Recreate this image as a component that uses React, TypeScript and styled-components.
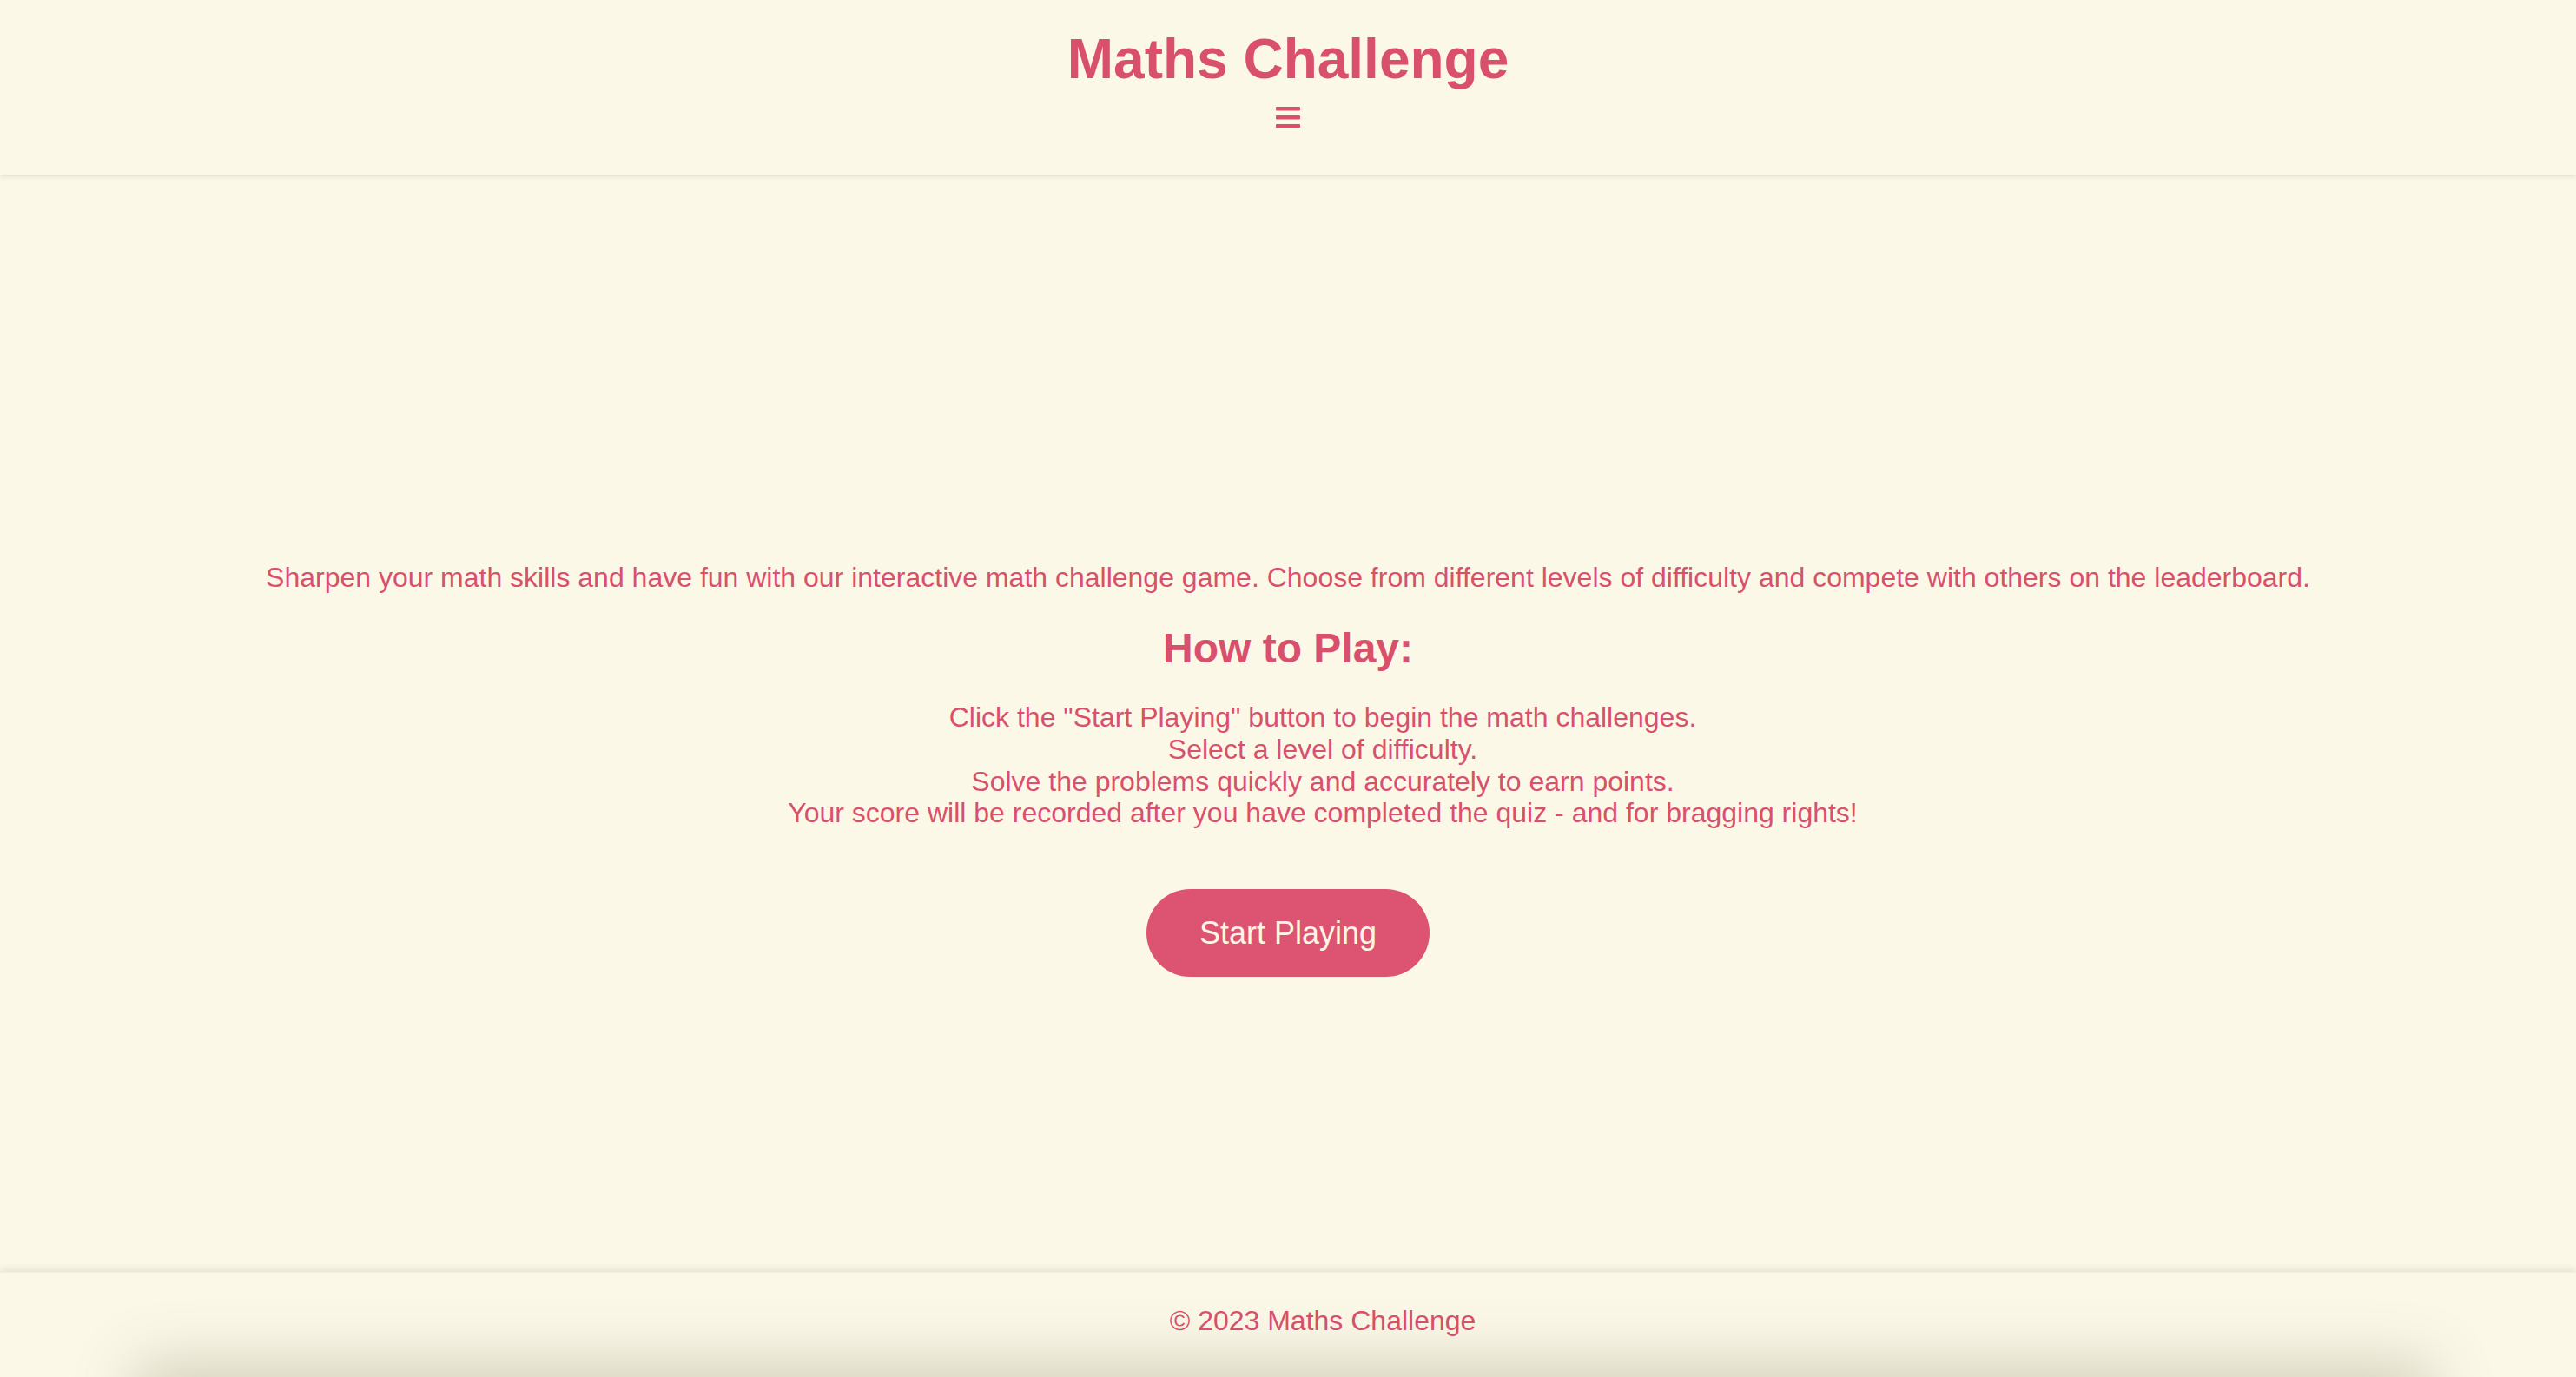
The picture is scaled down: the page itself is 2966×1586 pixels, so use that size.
import React from "react";
import styled, { createGlobalStyle } from "styled-components";

const pink = "#d9506d";
const cream = "#fbf8e8";

const GlobalStyle = createGlobalStyle`
  html, body {
    margin: 0;
    padding: 0;
    background: ${cream};
    overflow: hidden;
  }
  body {
    font-family: "Liberation Sans", Arial, Helvetica, sans-serif;
    color: ${pink};
  }
  * { box-sizing: border-box; }
`;

const Page = styled.div`
  height: 100vh;
  display: flex;
  flex-direction: column;
`;

const Header = styled.header`
  height: 201px;
  flex: none;
  padding-top: 31px;
  display: flex;
  flex-direction: column;
  align-items: center;
  background: ${cream};
  box-shadow: 0 2px 6px rgba(80, 70, 30, 0.14);
  position: relative;
  z-index: 1;
`;

const Title = styled.h1`
  margin: 0;
  font-size: 64px;
  font-weight: 700;
  line-height: 74px;
  color: ${pink};
`;

const MenuButton = styled.button`
  margin-top: 18px;
  padding: 0;
  border: none;
  background: transparent;
  width: 28px;
  height: 24px;
  display: flex;
  cursor: pointer;
`;

const Main = styled.main`
  flex: 1;
  display: flex;
  flex-direction: column;
  align-items: center;
  justify-content: center;
  padding-top: 106px;
  text-align: center;
`;

const Intro = styled.p`
  margin: 0;
  font-size: 32px;
  line-height: 37px;
`;

const SubTitle = styled.h2`
  margin: 35px 0 0;
  font-size: 48px;
  line-height: 55px;
  font-weight: 700;
`;

const Steps = styled.ul`
  margin: 34px 0 0;
  padding: 0 0 0 80px;
  list-style: none;
  font-size: 32px;
  line-height: 36.8px;
`;

const StartButton = styled.button`
  margin-top: 69px;
  padding: 30px 61px;
  border: none;
  border-radius: 999px;
  background: #dc5471;
  color: #fdf6e6;
  font-family: "Liberation Sans", Arial, Helvetica, sans-serif;
  font-size: 36px;
  line-height: 41px;
  cursor: pointer;
`;

const Footer = styled.footer`
  height: 121px;
  flex: none;
  padding: 0 0 0 80px;
  display: flex;
  align-items: center;
  justify-content: center;
  font-size: 32px;
  line-height: 37px;
  position: relative;
  overflow: hidden;
  background: ${cream};
  border-top: 1px solid #f3efdd;
  box-shadow: 0 -3px 8px rgba(80, 70, 30, 0.12);
`;

const FooterText = styled.p`
  margin: 0 0 10px;
`;

const BottomShade = styled.span`
  position: absolute;
  left: 170px;
  right: 180px;
  top: 100%;
  height: 80px;
  box-shadow: 0 0 70px 14px rgba(110, 100, 70, 0.28);
  pointer-events: none;
`;

const MenuIcon = () => (
  <svg width="28" height="24" viewBox="0 0 28 24" aria-hidden="true">
    <rect x="0" y="0" width="28" height="4.5" rx="1" fill={pink} />
    <rect x="0" y="10" width="28" height="4.5" rx="1" fill={pink} />
    <rect x="0" y="20" width="28" height="4.5" rx="1" fill={pink} />
  </svg>
);

export default function App() {
  return (
    <>
      <GlobalStyle />
      <Page>
        <Header>
          <Title>Maths Challenge</Title>
          <MenuButton aria-label="Menu">
            <MenuIcon />
          </MenuButton>
        </Header>
        <Main>
          <Intro>
            Sharpen your math skills and have fun with our interactive math challenge game. Choose from
            different levels of difficulty and compete with others on the leaderboard.
          </Intro>
          <SubTitle>How to Play:</SubTitle>
          <Steps>
            <li>Click the "Start Playing" button to begin the math challenges.</li>
            <li>Select a level of difficulty.</li>
            <li>Solve the problems quickly and accurately to earn points.</li>
            <li>Your score will be recorded after you have completed the quiz - and for bragging rights!</li>
          </Steps>
          <StartButton>Start Playing</StartButton>
        </Main>
        <Footer>
          <FooterText>© 2023 Maths Challenge</FooterText>
          <BottomShade />
        </Footer>
      </Page>
    </>
  );
}
